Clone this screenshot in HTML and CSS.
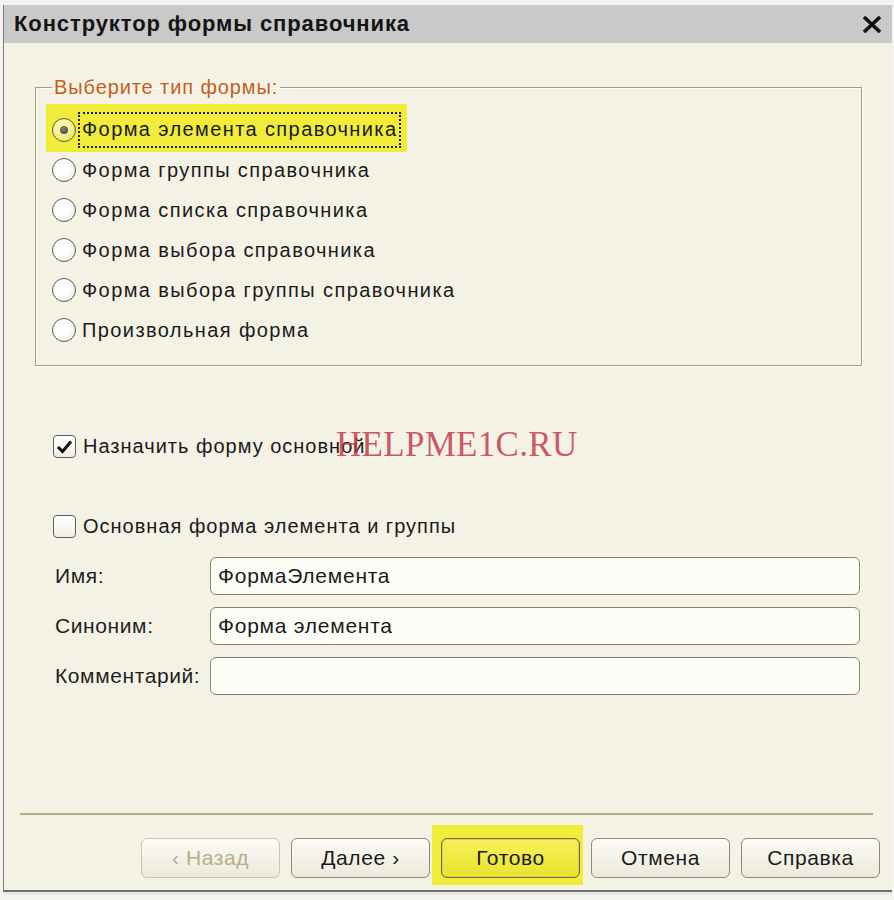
FILE: index.html
```html
<!DOCTYPE html>
<html lang="ru">
<head>
<meta charset="utf-8">
<title>Конструктор формы справочника</title>
<link rel="stylesheet" href="styles.css">
</head>
<body>
<div class="window">
  <div class="titlebar">
    <span class="title">Конструктор формы справочника</span>
    <svg class="close" width="20" height="17" viewBox="0 0 20 17"><path d="M2 1 L18 16 M18 1 L2 16" stroke="#111" stroke-width="3.6" fill="none"/></svg>
  </div>
  <div class="content">
    <fieldset class="group">
      <legend>Выберите тип формы:</legend>
      <div class="radio-list">
        <div class="hl">
          <div class="radio"><span class="rb checked"></span><span class="rtext focus">Форма элемента справочника</span></div>
        </div>
        <div class="radio"><span class="rb"></span><span class="rtext">Форма группы справочника</span></div>
        <div class="radio"><span class="rb"></span><span class="rtext">Форма списка справочника</span></div>
        <div class="radio"><span class="rb"></span><span class="rtext">Форма выбора справочника</span></div>
        <div class="radio"><span class="rb"></span><span class="rtext">Форма выбора группы справочника</span></div>
        <div class="radio"><span class="rb"></span><span class="rtext">Произвольная форма</span></div>
      </div>
    </fieldset>

    <div class="check-row first">
      <span class="cb"><svg width="17" height="15" viewBox="0 0 17 15"><path d="M2 8 L6.5 12.5 L15 2.5" stroke="#111" stroke-width="3" fill="none"/></svg></span>
      <span class="ctext">Назначить форму основной</span>
      <span class="watermark">HELPME1C.RU</span>
    </div>
    <div class="check-row second">
      <span class="cb"></span>
      <span class="ctext">Основная форма элемента и группы</span>
    </div>

    <div class="fields">
      <div class="field"><span class="flabel">Имя:</span><div class="input">ФормаЭлемента</div></div>
      <div class="field"><span class="flabel">Синоним:</span><div class="input">Форма элемента</div></div>
      <div class="field"><span class="flabel">Комментарий:</span><div class="input"></div></div>
    </div>

    <div class="separator"></div>

    <div class="buttons">
      <div class="btn disabled">‹ Назад</div>
      <div class="btn">Далее ›</div>
      <div class="btn-hl"><div class="btn default">Готово</div></div>
      <div class="btn">Отмена</div>
      <div class="btn">Справка</div>
    </div>
  </div>
</div>
</body>
</html>
```

FILE: styles.css
```css
html, body {
  margin: 0;
  padding: 0;
}
body {
  background: #f3f3ef;
  font-family: "Liberation Sans", Arial, sans-serif;
  color: #1a1a1a;
  width: 894px;
  height: 900px;
  overflow: hidden;
}
.window {
  margin: 5px 2px 0 3px;
  border-left: 1px solid #7c7c7c;
  border-bottom: 2px solid #6e6e6e;
  box-shadow: 0 3px 0 #e8e8e4;
}
.titlebar {
  height: 38px;
  background: #c9c9c9;
  display: flex;
  align-items: center;
  justify-content: space-between;
  padding: 0 10px 0 10px;
}
.title {
  font-size: 22px;
  font-weight: bold;
  letter-spacing: 0.9px;
  color: #141414;
}
.close {
  display: block;
}
.content {
  background: #f4f2e5;
  padding: 32px 0 12px 0;
  height: 847px;
  box-sizing: border-box;
}
.group {
  margin: 0 30px 0 31px;
  padding: 11px 0 15px 16px;
  border: 1px solid #a19e82;
  box-shadow: 1px 1px 0 #fffef6, inset 1px 1px 0 #fffef6;
}
.group legend {
  padding: 0 2px;
  font-size: 20px;
  line-height: 24px;
  letter-spacing: 0.9px;
  color: #c45f1a;
}
.radio-list {
  display: flex;
  flex-direction: column;
}
.radio {
  display: flex;
  align-items: center;
  height: 40px;
  gap: 6px;
}
.hl {
  align-self: flex-start;
  background: #f1ec3a;
  padding: 6px 6px 2px 6px;
  margin: -6px 0 -2px -6px;
}
.rb {
  width: 22px;
  height: 22px;
  border: 1px solid #5a5a52;
  border-radius: 50%;
  background: radial-gradient(circle at 40% 35%, #ffffff 40%, #e4e2d8 100%);
  position: relative;
  flex: none;
}
.rb.checked {
  background: radial-gradient(circle at 40% 35%, #fbf7a0 30%, #e3dc5a 100%);
}
.rb.checked::after {
  content: "";
  position: absolute;
  left: 7px;
  top: 7px;
  width: 8px;
  height: 8px;
  border-radius: 50%;
  background: radial-gradient(circle at 40% 35%, #8a8574, #3c3a30);
}
.rtext {
  font-size: 20px;
  letter-spacing: 1.4px;
  color: #1a1a1a;
}
.rtext.focus {
  border: 2px dotted #222;
  padding: 4px 2px 5px 2px;
  margin-left: -4px;
}
.check-row {
  display: flex;
  align-items: center;
  height: 32px;
  margin-left: 49px;
  gap: 7px;
  position: relative;
}
.check-row.first {
  margin-top: 64px;
}
.check-row.second {
  margin-top: 48px;
}
.cb {
  width: 21px;
  height: 21px;
  border: 1px solid #5f5e56;
  border-radius: 4px;
  background: linear-gradient(#ffffff, #efeee6);
  display: flex;
  align-items: center;
  justify-content: center;
  flex: none;
}
.ctext {
  font-size: 20px;
  letter-spacing: 1px;
}
.watermark {
  position: absolute;
  left: 283px;
  top: -5px;
  font-family: "Liberation Serif", "Times New Roman", serif;
  font-size: 35px;
  letter-spacing: 0.3px;
  color: rgba(190, 48, 66, 0.8);
}
.fields {
  margin: 15px 32px 0 51px;
  display: flex;
  flex-direction: column;
  gap: 12px;
}
.field {
  display: flex;
  align-items: center;
  height: 38px;
}
.flabel {
  width: 155px;
  flex: none;
  font-size: 21px;
  letter-spacing: 0.6px;
  color: #1e1e1e;
}
.input {
  flex: 1;
  height: 38px;
  box-sizing: border-box;
  border: 1px solid #86846c;
  border-radius: 6px;
  background: #fdfdf8;
  font-size: 21px;
  letter-spacing: 0.75px;
  padding: 0 7px;
  display: flex;
  align-items: center;
}
.separator {
  margin: 118px 19px 0 16px;
  height: 0;
  border-top: 2px solid #b4af8a;
}
.buttons {
  margin: 23px 12px 0 137px;
  display: flex;
  gap: 11px;
}
.btn {
  width: 139px;
  height: 40px;
  box-sizing: border-box;
  border: 1px solid #8d8a76;
  border-radius: 6px;
  background: linear-gradient(#fcfbf4, #ebe9dc);
  display: flex;
  align-items: center;
  justify-content: center;
  font-size: 21px;
  letter-spacing: 0.6px;
  color: #1a1a1a;
}
.btn.disabled {
  color: #b9ad88;
  border-color: #c8c5b4;
}
.btn-hl {
  background: #f1ec3a;
  padding: 13px 3px 7px 9px;
  margin: -13px -3px -7px -9px;
}
.btn.default {
  background: linear-gradient(#f6f25a, #e8e22e);
  border: 1px solid #6d6a48;
  box-shadow: inset 0 0 0 1px #d8d050;
}
```
